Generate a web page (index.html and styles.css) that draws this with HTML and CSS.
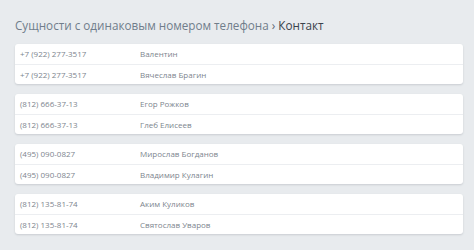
FILE: index.html
```html
<!DOCTYPE html>
<html lang="ru">
<head>
<meta charset="utf-8">
<title>Контакт</title>
<link rel="stylesheet" href="styles.css">
</head>
<body>
<div class="page">
  <h1 class="crumbs"><span class="crumb-parent">Сущности с одинаковым номером телефона</span> <span class="crumb-sep">›</span> <span class="crumb-current">Контакт</span></h1>

  <div class="group">
    <div class="row"><span class="phone">+7 (922) 277-3517</span><span class="name">Валентин</span></div>
    <div class="row"><span class="phone">+7 (922) 277-3517</span><span class="name">Вячеслав Брагин</span></div>
  </div>

  <div class="group">
    <div class="row"><span class="phone">(812) 666-37-13</span><span class="name">Егор Рожков</span></div>
    <div class="row"><span class="phone">(812) 666-37-13</span><span class="name">Глеб Елисеев</span></div>
  </div>

  <div class="group">
    <div class="row"><span class="phone">(495) 090-0827</span><span class="name">Мирослав Богданов</span></div>
    <div class="row"><span class="phone">(495) 090-0827</span><span class="name">Владимир Кулагин</span></div>
  </div>

  <div class="group">
    <div class="row"><span class="phone">(812) 135-81-74</span><span class="name">Аким Куликов</span></div>
    <div class="row"><span class="phone">(812) 135-81-74</span><span class="name">Святослав Уваров</span></div>
  </div>
</div>
</body>
</html>
```

FILE: styles.css
```css
html, body {
  margin: 0;
  padding: 0;
  background: #e8ebee;
}

body {
  font-family: "Open Sans", "Noto Sans", sans-serif;
  width: 474px;
  height: 250px;
  overflow: hidden;
}

.page {
  padding: 17px 11px 0 15px;
  display: flex;
  flex-direction: column;
  gap: 10px;
}

.crumbs {
  margin: 0 0 1px 0;
  font-size: 11.7px;
  font-weight: 400;
  line-height: 16px;
  color: #707d8b;
  white-space: nowrap;
}

.crumb-sep {
  color: #5d6873;
}

.crumb-current {
  color: #3a424b;
}

.group {
  background: #ffffff;
  border-radius: 3px;
  box-shadow: 0 1px 2px rgba(60, 70, 85, 0.18);
}

.row {
  display: grid;
  grid-template-columns: 120px 1fr;
  padding-left: 5px;
  height: 20px;
  align-items: center;
  font-size: 8px;
  line-height: 10px;
  color: #7d858e;
}

.row + .row {
  border-top: 1px solid #eceef1;
  height: 19px;
}
```
